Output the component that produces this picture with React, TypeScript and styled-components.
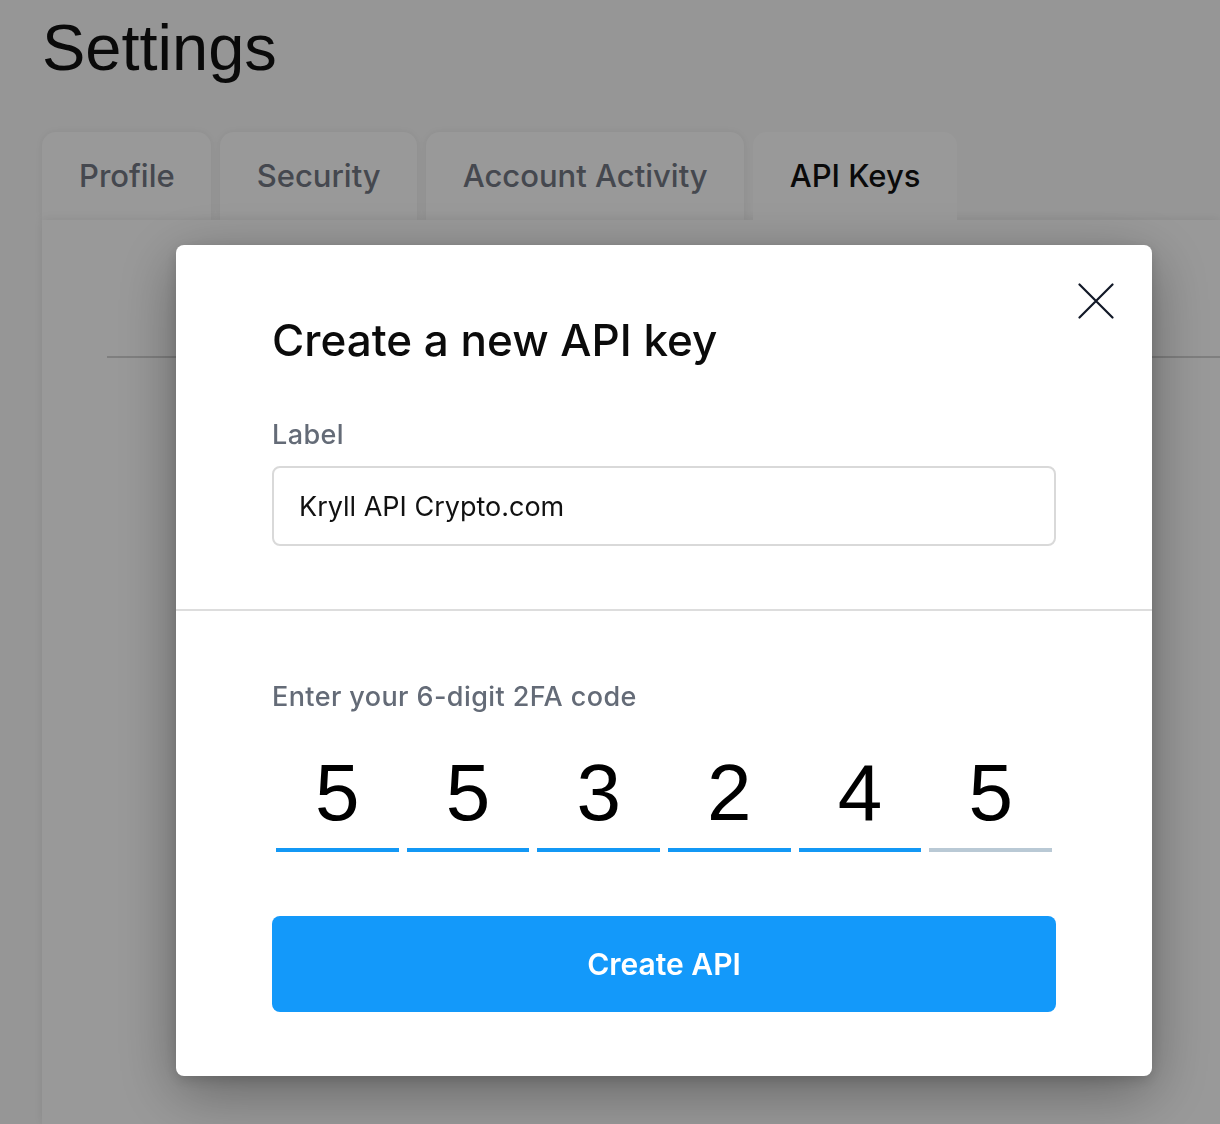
import React, { FC } from "react";
import styled, { createGlobalStyle } from "styled-components";

const GlobalStyle = createGlobalStyle`
  html, body {
    margin: 0;
    padding: 0;
    background-color: #fbfbfb;
    font-family: Inter, "Noto Sans", sans-serif;
  }
  * {
    box-sizing: border-box;
  }
`;

const Page = styled.div`
  min-height: 100vh;
  padding: 12px 0 0 42px;
  overflow: hidden;
`;

const Heading = styled.h1`
  margin: 0;
  font-family: "Liberation Sans", Arial, sans-serif;
  font-weight: 400;
  font-size: 65px;
  line-height: 72px;
  color: #111111;
`;

const TabRow = styled.div`
  display: flex;
  gap: 9px;
  margin-top: 48px;
`;

const Tab = styled.div<{ $active?: boolean }>`
  position: relative;
  z-index: ${(p) => (p.$active ? 2 : 0)};
  padding: 25px 36px 25px 37px;
  border-radius: 14px 14px 0 0;
  background-color: #ffffff;
  box-shadow: ${(p) =>
    p.$active ? "none" : "0 0 10px rgba(0, 0, 0, 0.07)"};
  font-size: 31px;
  line-height: 38px;
  font-weight: 500;
  color: ${(p) => (p.$active ? "#111111" : "#737884")};
`;

const Panel = styled.div`
  position: relative;
  z-index: 1;
  min-height: 904px;
  padding: 136px 0 0 65px;
  background-color: #ffffff;
  box-shadow: 0 0 10px rgba(0, 0, 0, 0.09);
`;

const PanelRule = styled.div`
  border-top: 2px solid #d4d4d4;
`;

const Overlay = styled.div`
  position: fixed;
  inset: 0;
  z-index: 10;
  display: flex;
  align-items: flex-start;
  padding: 245px 0 0 176px;
  background-color: rgba(0, 0, 0, 0.4);
`;

const Modal = styled.div`
  position: relative;
  width: 976px;
  border-radius: 8px;
  background-color: #ffffff;
  box-shadow: 0 16px 60px rgba(0, 0, 0, 0.35), 0 4px 14px rgba(0, 0, 0, 0.15);
`;

const CloseButton = styled.button`
  position: absolute;
  top: 38px;
  right: 38px;
  width: 36px;
  height: 36px;
  padding: 0;
  border: none;
  background: none;
  cursor: pointer;
  display: flex;
`;

const Section = styled.div<{ $top: number; $bottom: number }>`
  padding: ${(p) => `${p.$top}px 96px ${p.$bottom}px`};
`;

const Divider = styled.div`
  height: 2px;
  background-color: #dddddd;
`;

const Title = styled.h2`
  margin: 0 0 52px;
  font-size: 44px;
  line-height: 53px;
  font-weight: 500;
  color: #0b0b0b;
`;

const FieldLabel = styled.label<{ $gap: number }>`
  display: block;
  margin-bottom: ${(p) => p.$gap}px;
  font-size: 27px;
  line-height: 32px;
  font-weight: 500;
  letter-spacing: 0.4px;
  color: #646b77;
`;

const TextInput = styled.input`
  display: block;
  width: 100%;
  height: 80px;
  padding: 0 25px;
  border: 2px solid #d9d9d9;
  border-radius: 8px;
  font-family: Inter, "Noto Sans", sans-serif;
  font-size: 27px;
  color: #111111;
  background-color: #ffffff;
  outline: none;
`;

const CodeRow = styled.div`
  display: grid;
  grid-template-columns: repeat(6, 1fr);
  gap: 8px;
  padding: 0 4px;
`;

const CodeCell = styled.div<{ $filled: boolean }>`
  padding-bottom: 15px;
  border-bottom: 4px solid ${(p) => (p.$filled ? "#1398f5" : "#b9c9d5")};
  font-family: "Liberation Sans", Arial, sans-serif;
  font-size: 80px;
  line-height: 80px;
  text-align: center;
  color: #000000;
`;

const SubmitButton = styled.button`
  display: block;
  width: 100%;
  height: 96px;
  margin-top: 64px;
  border: none;
  border-radius: 8px;
  background-color: #1399fa;
  font-family: Inter, "Noto Sans", sans-serif;
  font-size: 30px;
  font-weight: 600;
  color: #ffffff;
  cursor: pointer;
`;

const tabs = ["Profile", "Security", "Account Activity", "API Keys"];
const code = ["5", "5", "3", "2", "4", "5"];

const App: FC = () => {
  return (
    <>
      <GlobalStyle />
      <Page>
        <Heading>Settings</Heading>
        <TabRow>
          {tabs.map((t) => (
            <Tab key={t} $active={t === "API Keys"}>
              {t}
            </Tab>
          ))}
        </TabRow>
        <Panel>
          <PanelRule />
        </Panel>
      </Page>

      <Overlay>
        <Modal>
          <CloseButton aria-label="Close">
            <svg width="36" height="36" viewBox="0 0 36 36" fill="none">
              <path
                d="M1.5 1.5 34.5 34.5 M34.5 1.5 1.5 34.5"
                stroke="#111827"
                strokeWidth="2.2"
                strokeLinecap="round"
              />
            </svg>
          </CloseButton>

          <Section $top={69} $bottom={63}>
            <Title>Create a new API key</Title>
            <FieldLabel $gap={15}>Label</FieldLabel>
            <TextInput defaultValue="Kryll API Crypto.com" />
          </Section>

          <Divider />

          <Section $top={70} $bottom={64}>
            <FieldLabel $gap={40}>Enter your 6-digit 2FA code</FieldLabel>
            <CodeRow>
              {code.map((d, i) => (
                <CodeCell key={i} $filled={i < 5}>
                  {d}
                </CodeCell>
              ))}
            </CodeRow>
            <SubmitButton>Create API</SubmitButton>
          </Section>
        </Modal>
      </Overlay>
    </>
  );
};

export default App;
